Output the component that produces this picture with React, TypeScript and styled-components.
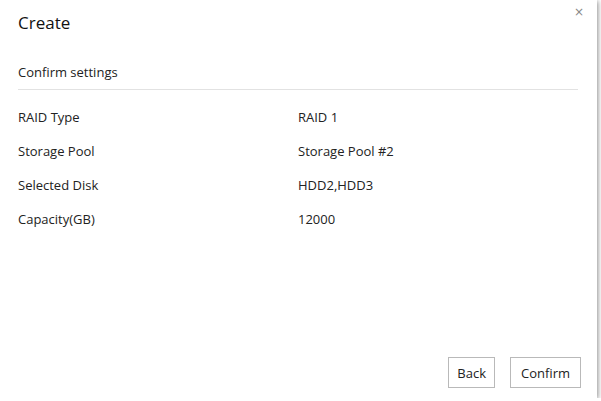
import {Fragment} from "react";
import styled, {createGlobalStyle} from "styled-components";

const GlobalStyle = createGlobalStyle`
    html, body {
        margin: 0;
        padding: 0;
        background: #ffffff;
    }
    body {
        font-family: "Open Sans", "Noto Sans", sans-serif;
        color: #222222;
    }
`;

const Dialog = styled.div`
    position: relative;
    box-sizing: border-box;
    width: 597px;
    height: 398px;
    background: #ffffff;
    box-shadow: 1px 1px 5px rgba(0, 0, 0, 0.45);
    display: flex;
    flex-direction: column;
    padding: 12px 19px 10px 18px;
`;

const Title = styled.h1`
    margin: 0;
    font-size: 17px;
    font-weight: 400;
    line-height: 22px;
    color: #111111;
`;

const CloseButton = styled.button`
    position: absolute;
    top: 5px;
    right: 13px;
    border: none;
    background: none;
    padding: 0;
    font-family: "DejaVu Sans", sans-serif;
    font-size: 12px;
    color: #888888;
    cursor: pointer;
`;

const SectionHeading = styled.div`
    margin-top: 29px;
    padding-bottom: 8px;
    border-bottom: 1px solid #e2e2e2;
    font-size: 13px;
    line-height: 18px;
`;

const InfoList = styled.div`
    display: grid;
    grid-template-columns: 280px 1fr;
    row-gap: 16px;
    margin-top: 18px;
    font-size: 13px;
    line-height: 18px;
`;

const Label = styled.div`
    color: #222222;
`;

const Value = styled.div`
    color: #222222;
`;

const Footer = styled.div`
    margin-top: auto;
    display: flex;
    justify-content: flex-end;
    gap: 15px;
    margin-right: -3px;
`;

const Button = styled.button<{$pad?: number}>`
    box-sizing: border-box;
    height: 31px;
    padding: 0 ${(p) => p.$pad ?? 10}px;
    border: 1px solid #b9b9b9;
    background: #ffffff;
    font-family: inherit;
    font-size: 13px;
    color: #222222;
    cursor: pointer;
`;

const rows = [
    ["RAID Type", "RAID 1"],
    ["Storage Pool", "Storage Pool #2"],
    ["Selected Disk", "HDD2,HDD3"],
    ["Capacity(GB)", "12000"],
];

export default function App() {
    return (
        <>
            <GlobalStyle />
            <Dialog>
                <Title>Create</Title>
                <CloseButton>×</CloseButton>
                <SectionHeading>Confirm settings</SectionHeading>
                <InfoList>
                    {rows.map(([label, value]) => (
                        <Fragment key={label}>
                            <Label>{label}</Label>
                            <Value>{value}</Value>
                        </Fragment>
                    ))}
                </InfoList>
                <Footer>
                    <Button $pad={8}>Back</Button>
                    <Button>Confirm</Button>
                </Footer>
            </Dialog>
        </>
    );
}
